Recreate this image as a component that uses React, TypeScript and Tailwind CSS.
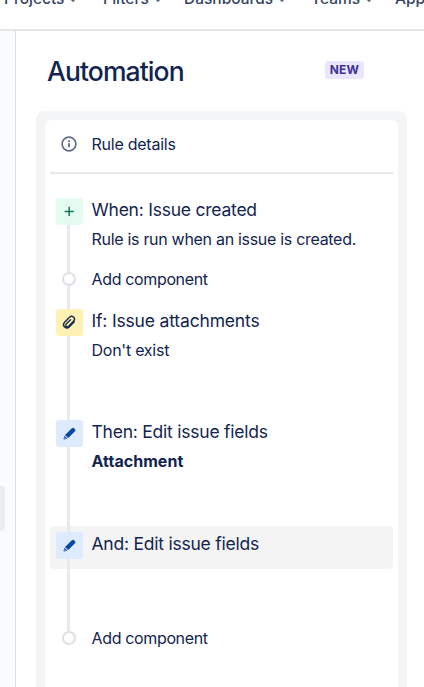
import type { ReactNode } from 'react';

function NavItem({ label, className }: { label: string; className: string }) {
  return (
    <div className={`flex shrink-0 items-center gap-[5px] ${className}`}>
      <span>{label}</span>
      <svg width="8" height="8" viewBox="0 0 8 8" fill="none" stroke="#5e6c84" strokeWidth="1.600" strokeLinecap="round" className="mt-[2px]">
        <path d="M1.500 2.500 4 5l2.500-2.500" />
      </svg>
    </div>
  );
}

function PlusIcon() {
  return (
    <svg width="27" height="27" viewBox="0 0 27 27" fill="none" stroke="#0f7b55" strokeWidth="1.500" strokeLinecap="round">
      <path d="M13.200 9.500v8M9.200 13.500h8" />
    </svg>
  );
}

function ClipIcon() {
  return (
    <svg width="27" height="27" viewBox="0 0 27 27" fill="none" stroke="#172b4d" strokeWidth="1.400" strokeLinecap="round" strokeLinejoin="round">
      <path d="M18.300 12.800 13.200 18a3.300 3.300 0 0 1-4.900-4.400l5.200-5.300a2.800 2.800 0 0 1 4.200 3.800l-5.100 5.200a1.600 1.600 0 0 1-2.400-2.200l4.400-4.400" />
    </svg>
  );
}

function PencilIcon() {
  return (
    <svg width="27" height="27" viewBox="0 0 27 27" fill="#0747a6">
      <path d="m15.100 8.900.8-.7c.7-.7 1.500-.7 2.100 0l1 1c.6.600.6 1.300 0 2l-.8.800-6 6L9 15z" />
      <path d="m8.500 15.700 2.900 2.900-3 .9c-.6.100-1-.3-.8-.9z" />
      <path d="m8.600 16.900 1.500 1.500-1.500.5-.5-.5z" fill="#8eb0e2" />
    </svg>
  );
}

function Ring() {
  return <div className="size-[14px] shrink-0 rounded-full border-2 border-[#dfe0e6] bg-white" />;
}

function Tile({ className, children }: { className: string; children: ReactNode }) {
  return <div className={`size-[27px] shrink-0 rounded-[3px] ${className}`}>{children}</div>;
}

type RowProps = {
  className: string;
  lead: string;
  marker: ReactNode;
  children: ReactNode;
  last?: boolean;
};

function Row({ className, lead, marker, children, last }: RowProps) {
  return (
    <div className={`flex ${className}`}>
      <div className="ml-[5px] flex w-[28px] flex-col items-center">
        <div className={`mr-px w-[3px] shrink-0 ${lead}`} />
        {marker}
        {!last && <div className="mr-px w-[3px] flex-1 bg-[#e8e9ee]" />}
      </div>
      <div className="ml-[8.500px] whitespace-nowrap">{children}</div>
    </div>
  );
}

const title = 'text-[17.5px] leading-[22px] tracking-[-0.230px]';
const body = 'text-[16px] leading-5';

export default function App() {
  return (
    <div className="flex h-[687px] w-[424px] flex-col overflow-hidden bg-white font-['Inter','Liberation_Sans',sans-serif] text-[#122550]">
      <header className="h-[31px] shrink-0 overflow-hidden border-b-2 border-[#e4e6ea]">
        <nav className="-mt-[11px] flex h-5 text-[15.5px] leading-5 font-medium text-[#344563]">
          <NavItem label="Projects" className="ml-[4px] w-[99px]" />
          <NavItem label="Filters" className="w-[81px]" />
          <NavItem label="Dashboards" className="w-[127px]" />
          <NavItem label="Teams" className="w-[84px]" />
          <NavItem label="Apps" className="" />
        </nav>
      </header>
      <div className="flex min-h-0 flex-1">
        <aside className="w-[16px] shrink-0 border-r border-[#dfe1e6] bg-[#fafbfc] pt-[455px]">
          <div className="h-[45px] w-[5px] rounded-r-[3px] bg-[#ebecf0]" />
        </aside>
        <main className="flex min-w-0 flex-1 flex-col pl-[20px]">
          <div className="flex h-[80px] shrink-0 items-center">
            <h1 className="ml-[11px] w-[278px] text-[26.5px] leading-8 font-medium tracking-[-0.900px]">Automation</h1>
            <span className="mb-[2px] flex h-[18px] w-[39px] items-center justify-center rounded-[3px] bg-[#eae6ff] text-[12px] font-bold tracking-[0.200px] text-[#403294]">NEW</span>
          </div>
          <section className="h-[600px] w-[371px] shrink-0 rounded-t-[8px] bg-[#f4f5f7] px-[9px] pt-[9px]">
            <div className="h-full rounded-t-[7px] bg-white px-[5px]">
              <div className="flex h-[54px] items-center border-b-2 border-[#e7e8ee] pb-[4px]">
                <svg width="16" height="16" viewBox="0 0 16 16" fill="none" stroke="#5e6c84" strokeWidth="1.600" className="ml-[11px]">
                  <circle cx="8" cy="8" r="6.900" />
                  <path d="M8 7.300v4M8 4.300v1.700" strokeWidth="1.800" />
                </svg>
                <span className={`ml-[14.500px] tracking-[-0.250px] ${body}`}>Rule details</span>
              </div>
              <div className="pt-[18px]">
                <Row className="h-[76px]" lead="h-[6px]" marker={<Tile className="bg-[#e3fcef]"><PlusIcon /></Tile>}>
                  <div className={`mt-[7px] ${title}`}>When: Issue created</div>
                  <div className={`mt-[8px] tracking-[-0.300px] ${body}`}>Rule is run when an issue is created.</div>
                </Row>
                <Row className="h-[35px]" lead="h-[4px] bg-[#e8e9ee]" marker={<Ring />}>
                  <div className={`mt-[1px] tracking-[-0.350px] ${body}`}>Add component</div>
                </Row>
                <Row className="h-[111px]" lead="h-[6px] bg-[#e8e9ee]" marker={<Tile className="bg-[#fff0b3]"><ClipIcon /></Tile>}>
                  <div className="mt-[7px] text-[17.5px] leading-[22px] tracking-[-0.170px]">If: Issue attachments</div>
                  <div className={`mt-[8px] tracking-[-0.250px] ${body}`}>Don't exist</div>
                </Row>
                <Row className="h-[112px]" lead="h-[6px] bg-[#e8e9ee]" marker={<Tile className="bg-[#deebff]"><PencilIcon /></Tile>}>
                  <div className={`mt-[7px] ${title}`}>Then: Edit issue fields</div>
                  <div className={`mt-[8px] font-bold tracking-[0.050px] ${body}`}>Attachment</div>
                </Row>
                <Row className="h-[43px] rounded-[4px] bg-[#f4f4f4]" lead="h-[6px] bg-[#e8e9ee]" marker={<Tile className="bg-[#deebff]"><PencilIcon /></Tile>}>
                  <div className={`mt-[7px] ${title}`}>And: Edit issue fields</div>
                </Row>
                <Row className="h-[83px]" last lead="h-[62px] bg-[#e8e9ee]" marker={<Ring />}>
                  <div className={`mt-[59px] tracking-[-0.350px] ${body}`}>Add component</div>
                </Row>
              </div>
            </div>
          </section>
        </main>
      </div>
    </div>
  );
}
